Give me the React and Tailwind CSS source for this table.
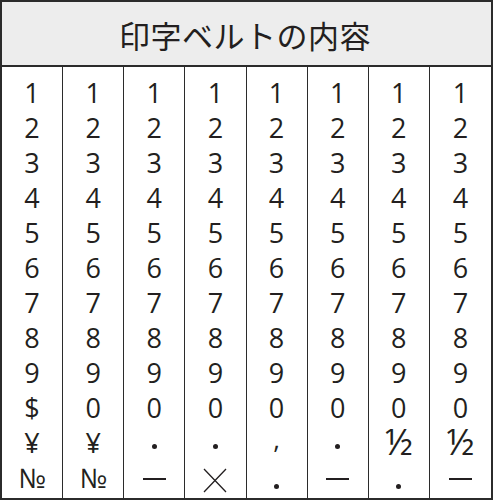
import React from "react";

const digits = ["1", "2", "3", "4", "5", "6", "7", "8", "9"];

function Cross() {
  return (
    <svg width="24" height="25" viewBox="0 0 24 25" className="mt-[6px]">
      <path d="M1 1 L23 24 M23 1 L1 24" stroke="#231f20" strokeWidth="1.3" fill="none" />
    </svg>
  );
}

function Dash() {
  return <span className="block w-[23px] h-[2px] bg-[#231f20] mt-[2px]" />;
}

function MidDot() {
  return <span className="block w-[5px] h-[5px] rounded-full bg-[#231f20] mt-[7px]" />;
}

function LowDot() {
  return <span className="block w-[5px] h-[5px] rounded-full bg-[#231f20] mt-[17px]" />;
}

function Half() {
  return <span className="text-[36px] leading-[24px] mb-[2px]">½</span>;
}

const columns = [
  ["$", "¥", "№"],
  ["0", "¥", "№"],
  ["0", <MidDot />, <Dash />],
  ["0", <MidDot />, <Cross />],
  ["0", <span className="leading-[12px] mb-[8px] text-[26px]">,</span>, <LowDot />],
  ["0", <MidDot />, <Dash />],
  ["0", <Half />, <LowDot />],
  ["0", <Half />, <Dash />],
];

export default function App() {
  return (
    <div
      className="w-[493px] h-[500px] border-2 border-[#2b2b2b] bg-white flex flex-col text-[#231f20]"
      style={{ fontFamily: '"Open Sans", "Noto Sans", "Noto Sans CJK JP", sans-serif' }}
    >
      <div className="h-[65px] bg-[#ededed] border-b-2 border-[#2b2b2b] flex items-center justify-center">
        <span
          className="text-[31px] leading-none tracking-[0.5px] pt-[2px] pr-[3px]"
          style={{ fontFamily: '"Noto Sans CJK JP", sans-serif' }}
        >
          印字ベルトの内容
        </span>
      </div>
      <div className="flex-1 grid grid-cols-8 divide-x divide-[#2b2b2b]">
        {columns.map((extra, ci) => (
          <div key={ci} className="flex flex-col items-center pt-2">
            {[...digits, ...extra].map((c, ri) => (
              <div key={ri} className="h-[35px] w-full flex items-center justify-center text-[27px] leading-none">
                {c}
              </div>
            ))}
          </div>
        ))}
      </div>
    </div>
  );
}
